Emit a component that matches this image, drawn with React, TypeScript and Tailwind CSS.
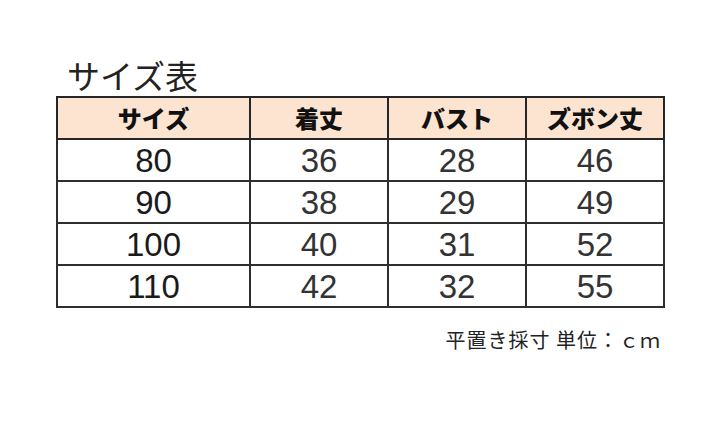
const headers = ["サイズ", "着丈", "バスト", "ズボン丈"]

const rows = [
  ["80", "36", "28", "46"],
  ["90", "38", "29", "49"],
  ["100", "40", "31", "52"],
  ["110", "42", "32", "55"],
]

const colWidths = ["w-[193px]", "w-[138px]", "w-[138px]", "w-[138px]"]

const jp = "font-['Noto_Sans_CJK_JP','Noto_Sans',sans-serif]"
const num = "font-['Liberation_Sans','Noto_Sans_CJK_JP',sans-serif]"

export default function App() {
  return (
    <div className="w-[720px] h-[434px] bg-white pl-[56px] pt-[55px]">
      <h1 className={`${jp} text-[33px] leading-[40px] text-[#222] pl-[11px] font-normal`}>
        サイズ表
      </h1>
      <table className="border-collapse mt-[1px]">
        <thead>
          <tr className="bg-[#fce4d0] h-[42px]">
            {headers.map((h, i) => (
              <th
                key={h}
                className={`${jp} ${colWidths[i]} border-2 border-[#262626] text-[24px] leading-none font-black text-[#111] text-center p-0`}
              >
                {h}
              </th>
            ))}
          </tr>
        </thead>
        <tbody>
          {rows.map((r) => (
            <tr key={r[0]} className="h-[42px]">
              {r.map((v, i) => (
                <td
                  key={i}
                  className={`${num} border-2 border-[#2e2e2e] text-center text-[33px] leading-none p-0 ${i === 0 ? "text-[#1a1a1a]" : "text-[#333]"}`}
                >
                  {v}
                </td>
              ))}
            </tr>
          ))}
        </tbody>
      </table>
      <div className="w-[605px] flex justify-end mt-[19px]">
        <p className={`${jp} text-[20px] leading-[26px] text-[#222] tracking-[1px]`}>
          平置き採寸 単位：ｃｍ
        </p>
      </div>
    </div>
  )
}
